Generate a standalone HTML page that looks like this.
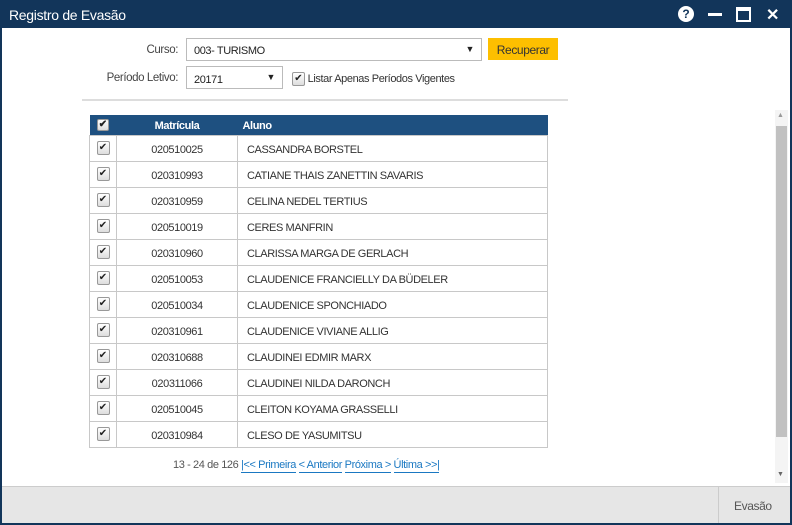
<!DOCTYPE html>
<html><head><meta charset="utf-8"><style>
*{box-sizing:border-box;margin:0;padding:0}
body{width:792px;height:525px;background:#fff;font-family:"Liberation Sans",sans-serif;font-size:11px;letter-spacing:-0.4px;color:#333;position:relative;overflow:hidden}
.win{position:absolute;left:0;top:0;width:792px;height:525px;border:2px solid #12355a;border-top:0}
.title{position:absolute;left:0;top:0;width:792px;height:28px;background:#12355a;color:#fff;font-size:14px;letter-spacing:-0.3px;padding:7px 9px}
.ic{position:absolute;top:7px;color:#fff;font-weight:bold}
.lbl{position:absolute;font-size:11.5px;color:#444;text-align:right}
.sel{position:absolute;border:1px solid #bbb;background:#fff;font-size:11px;padding:6px 7px 0;color:#222}
.sel b{position:absolute;right:7px;top:5px;font-size:9px}
.btn{position:absolute;left:488px;top:38px;width:70px;height:22px;background:#fdbf00;color:#333;font-size:12px;text-align:center;padding-top:5px}
.cb{display:inline-block;width:13px;height:14px;border:1px solid #999;border-radius:2px;background:linear-gradient(#fff,#ddd);color:#222;font-size:10px;line-height:12px;text-align:center;letter-spacing:0;vertical-align:middle}
table{position:absolute;left:89px;top:115px;width:459px;border-collapse:collapse}
th{background:#1e5080;color:#fff;height:20px;font-size:11px;font-weight:bold;text-align:left;padding-top:2px}
td{height:26px;border:1px solid #c8c8c8;font-size:11px;color:#333;padding-top:3px}
td.m{text-align:center}
td.a{padding-left:9px}
td.k{text-align:center;width:27px;padding-top:0}
.pg{position:absolute;left:173px;top:459px;font-size:11px;color:#555}
.pg a{color:#1a78c2;text-decoration:none;border-bottom:1px solid #1a78c2;padding-bottom:1px}
.foot{position:absolute;left:2px;top:486px;width:788px;height:37px;background:#e6e6e6;border-top:1px solid #ccc}
.ev{position:absolute;right:0;top:0;width:72px;height:36px;border-left:1px solid #ccc;font-size:12px;color:#555;padding:12px 0 0 15px}
</style></head><body>
<div class="win"></div>
<div class="title">Registro de Evasão
<span class="ic" style="left:678px;top:6px;width:16px;height:16px;border-radius:8px;background:#fff;color:#12355a;font-size:12px;text-align:center;line-height:16px;letter-spacing:0">?</span>
<span style="position:absolute;left:708px;top:13px;width:14px;height:3px;background:#fff"></span>
<span style="position:absolute;left:736px;top:7px;width:15px;height:15px;border:2px solid #fff;border-top-width:4px"></span>
<span class="ic" style="left:766px;top:5px;font-size:16px;letter-spacing:0">✕</span>
</div>
<div class="lbl" style="left:100px;top:44px;width:78px">Curso:</div>
<div class="sel" style="left:186px;top:38px;width:296px;height:23px">003- TURISMO<b>▼</b></div>
<div class="btn">Recuperar</div>
<div class="lbl" style="left:80px;top:72px;width:98px">Período Letivo:</div>
<div class="sel" style="left:186px;top:66px;width:97px;height:23px;padding-top:7px">20171<b>▼</b></div>
<div style="position:absolute;left:292px;top:72px"><span class="cb">✔</span> <span style="font-size:11px;color:#333">Listar Apenas Períodos Vigentes</span></div>
<div style="position:absolute;left:82px;top:99px;width:486px;height:2px;background:#ddd"></div>
<table>
<tr><th style="text-align:center;width:27px;padding-top:0"><span class="cb" style="width:12px;height:12px;line-height:10px">✔</span></th><th style="width:121px;text-align:center">Matrícula</th><th style="padding-left:5px">Aluno</th></tr>
<tr><td class="k"><span class="cb">✔</span></td><td class="m">020510025</td><td class="a">CASSANDRA BORSTEL</td></tr>
<tr><td class="k"><span class="cb">✔</span></td><td class="m">020310993</td><td class="a">CATIANE THAIS ZANETTIN SAVARIS</td></tr>
<tr><td class="k"><span class="cb">✔</span></td><td class="m">020310959</td><td class="a">CELINA NEDEL TERTIUS</td></tr>
<tr><td class="k"><span class="cb">✔</span></td><td class="m">020510019</td><td class="a">CERES MANFRIN</td></tr>
<tr><td class="k"><span class="cb">✔</span></td><td class="m">020310960</td><td class="a">CLARISSA MARGA DE GERLACH</td></tr>
<tr><td class="k"><span class="cb">✔</span></td><td class="m">020510053</td><td class="a">CLAUDENICE FRANCIELLY DA BÜDELER</td></tr>
<tr><td class="k"><span class="cb">✔</span></td><td class="m">020510034</td><td class="a">CLAUDENICE SPONCHIADO</td></tr>
<tr><td class="k"><span class="cb">✔</span></td><td class="m">020310961</td><td class="a">CLAUDENICE VIVIANE ALLIG</td></tr>
<tr><td class="k"><span class="cb">✔</span></td><td class="m">020310688</td><td class="a">CLAUDINEI EDMIR MARX</td></tr>
<tr><td class="k"><span class="cb">✔</span></td><td class="m">020311066</td><td class="a">CLAUDINEI NILDA DARONCH</td></tr>
<tr><td class="k"><span class="cb">✔</span></td><td class="m">020510045</td><td class="a">CLEITON KOYAMA GRASSELLI</td></tr>
<tr><td class="k"><span class="cb">✔</span></td><td class="m">020310984</td><td class="a">CLESO DE YASUMITSU</td></tr>
</table>
<div class="pg">13 - 24 de 126 <a>|&lt;&lt; Primeira</a> <a>&lt; Anterior</a> <a>Próxima &gt;</a> <a>Última &gt;&gt;|</a></div>
<div style="position:absolute;left:775px;top:110px;width:13px;height:373px;background:#f4f4f4"></div>
<div style="position:absolute;left:777px;top:112px;font-size:7px;color:#999">▲</div>
<div style="position:absolute;left:776px;top:126px;width:11px;height:311px;background:#c1c1c1"></div>
<div style="position:absolute;left:777px;top:471px;font-size:7px;color:#666">▼</div>
<div class="foot"><div class="ev">Evasão</div></div>
</body></html>
